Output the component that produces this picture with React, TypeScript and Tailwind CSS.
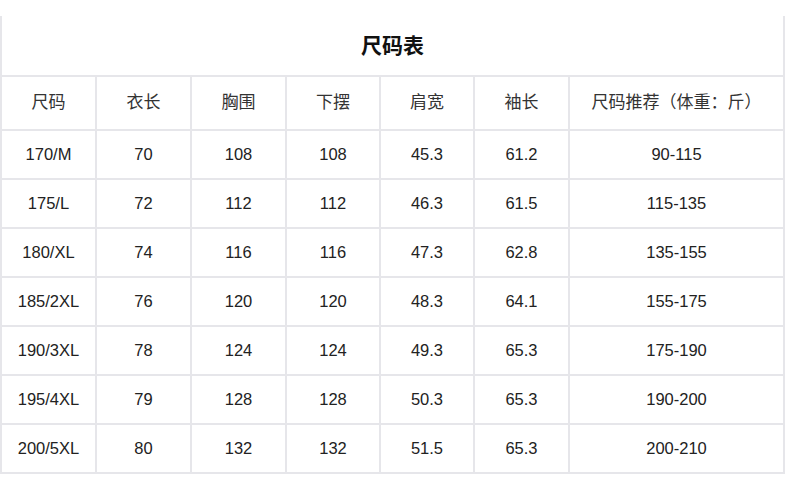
const headers = ["尺码", "衣长", "胸围", "下摆", "肩宽", "袖长", "尺码推荐（体重：斤）"];

const rows = [
  ["170/M", "70", "108", "108", "45.3", "61.2", "90-115"],
  ["175/L", "72", "112", "112", "46.3", "61.5", "115-135"],
  ["180/XL", "74", "116", "116", "47.3", "62.8", "135-155"],
  ["185/2XL", "76", "120", "120", "48.3", "64.1", "155-175"],
  ["190/3XL", "78", "124", "124", "49.3", "65.3", "175-190"],
  ["195/4XL", "79", "128", "128", "50.3", "65.3", "190-200"],
  ["200/5XL", "80", "132", "132", "51.5", "65.3", "200-210"],
];

const widths = ["w-[95px]", "w-[95px]", "w-[95px]", "w-[94px]", "w-[94px]", "w-[95px]", "w-[215px]"];

export default function App() {
  return (
    <div className="w-[790px] h-[500px] bg-white pt-[16px] font-['Liberation_Sans','Noto_Sans_CJK_SC',sans-serif] text-[#222]">
      <table className="table-fixed border-collapse w-[785px]">
        <colgroup>
          {widths.map((w, i) => (
            <col key={i} className={w} />
          ))}
        </colgroup>
        <tbody>
          <tr className="h-[60px]">
            <td
              colSpan={7}
              className="border-x-2 border-b-2 border-[#e6e6ea] text-center text-[21px] font-bold text-[#111]"
            >
              尺码表
            </td>
          </tr>
          <tr className="h-[54px]">
            {headers.map((h, i) => (
              <td key={i} className="border-2 border-[#e6e6ea] text-center text-[17px] text-[#333]">
                {h}
              </td>
            ))}
          </tr>
          {rows.map((r, ri) => (
            <tr key={ri} className="h-[49px]">
              {r.map((c, ci) => (
                <td key={ci} className="border-2 border-[#e6e6ea] text-center text-[16.5px]">
                  {c}
                </td>
              ))}
            </tr>
          ))}
        </tbody>
      </table>
    </div>
  );
}
